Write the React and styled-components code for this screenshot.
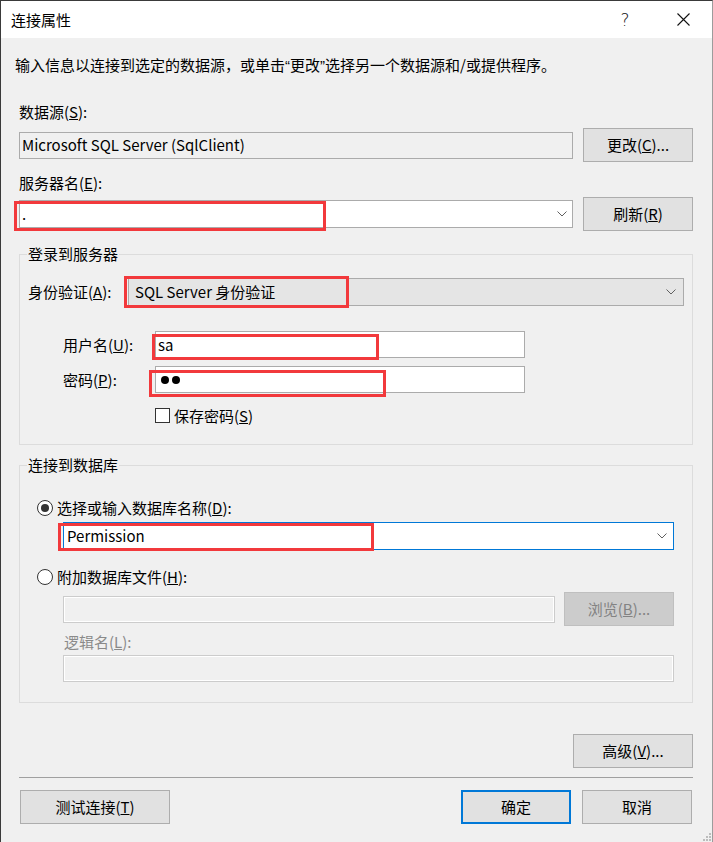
import React from "react";
import styled, { createGlobalStyle } from "styled-components";

const GlobalStyle = createGlobalStyle`
  html, body { margin: 0; padding: 0; background: #f0f0f0; }
  body {
    font-family: "Noto Sans CJK SC", "Noto Sans", sans-serif;
    font-size: 15px;
    color: #000;
  }
  * { box-sizing: border-box; }
`;

const Window = styled.div`
  position: relative;
  width: 713px;
  height: 842px;
  background: #f0f0f0;
  border-left: 1px solid #3a3a3a;
  border-top: 1px solid #3a3a3a;
  border-right: 1px solid #9c9c9c;
  display: flex;
  flex-direction: column;
  overflow: hidden;
`;

const TitleBar = styled.div`
  height: 37px;
  flex: none;
  background: #fff;
  display: flex;
  align-items: center;
  padding-left: 10px;
`;

const TitleText = styled.div`
  font-size: 15px;
  line-height: 20px;
`;

const CaptionButtons = styled.div`
  margin-left: auto;
  display: flex;
  height: 100%;
`;

const CaptionButton = styled.div`
  width: 58px;
  height: 100%;
  display: flex;
  align-items: center;
  justify-content: center;
  font-family: "DejaVu Sans", sans-serif;
  font-weight: 300;
  font-size: 17px;
  color: #111;
`;

const Body = styled.div`
  flex: 1;
  display: flex;
  flex-direction: column;
  padding: 17px 19px 0 18px;
`;

const Text = styled.div`
  line-height: 20px;
  white-space: nowrap;
  margin-top: ${(p) => p.$mt || 0}px;
  margin-left: ${(p) => p.$ml || 0}px;
  color: ${(p) => (p.$disabled ? "#8a8a8a" : "#000")};
`;

const Quote = styled.span`
  font-family: "Liberation Sans", sans-serif;
`;

const Row = styled.div`
  display: flex;
  align-items: center;
  height: ${(p) => p.$h || 34}px;
  margin-top: ${(p) => p.$mt || 0}px;
  padding-left: ${(p) => p.$pl || 0}px;
  padding-right: ${(p) => p.$pr || 0}px;
  gap: ${(p) => p.$gap || 0}px;
  justify-content: ${(p) => p.$justify || "flex-start"};
`;

const FieldWrap = styled.div`
  position: relative;
  flex: ${(p) => (p.$w ? "none" : "1")};
  width: ${(p) => (p.$w ? `${p.$w}px` : "auto")};
  height: ${(p) => p.$h || 27}px;
`;

const TextBox = styled.div`
  height: 100%;
  width: 100%;
  border: 1px solid ${(p) => (p.$disabled ? "#cccccc" : "#ababab")};
  background: ${(p) => (p.$readonly || p.$disabled ? "#f0f0f0" : "#fff")};
  box-shadow: ${(p) => (p.$disabled ? "inset 0 0 0 1px #fff" : "none")};
  display: flex;
  align-items: center;
  padding-left: ${(p) => p.$pl || 2}px;
  line-height: 20px;
  white-space: nowrap;
`;

const Combo = styled.div`
  height: 100%;
  width: 100%;
  border: 1px solid ${(p) => (p.$focused ? "#0078d7" : "#ababab")};
  background: ${(p) => (p.$list ? "#e5e5e5" : "#fff")};
  display: flex;
  align-items: center;
  padding-left: ${(p) => p.$pl || 2}px;
  padding-right: ${(p) => p.$pr || 6}px;
  line-height: 20px;
  white-space: nowrap;
`;

const ComboValue = styled.div`
  flex: 1;
`;

const Chevron = () => (
  <svg width="10" height="6" viewBox="0 0 10 6">
    <path d="M0.5 0.5 L5 5 L9.5 0.5" fill="none" stroke="#606060" strokeWidth="1" />
  </svg>
);

const Button = styled.div`
  flex: none;
  width: ${(p) => p.$w || 110}px;
  height: 34px;
  margin-left: ${(p) => (p.$auto ? "auto" : `${p.$ml || 0}px`)};
  margin-right: ${(p) => p.$mr || 0}px;
  background: ${(p) => (p.$disabled ? "#cccccc" : "#e1e1e1")};
  border: ${(p) =>
    p.$default ? "2px solid #0078d7" : p.$disabled ? "1px solid #bfbfbf" : "1px solid #adadad"};
  color: ${(p) => (p.$disabled ? "#838383" : "#000")};
  display: flex;
  align-items: center;
  justify-content: center;
  line-height: 20px;
  white-space: nowrap;
`;

const Group = styled.fieldset`
  margin: ${(p) => p.$mt || 0}px 0 0 0;
  padding: ${(p) => p.$pt || 0}px 8px ${(p) => p.$pb || 0}px 8px;
  border: 1px solid #dcdcdc;
  min-width: 0;
`;

const Legend = styled.legend`
  padding: 0 1px;
  margin-left: -1px;
  line-height: 20px;
  font-size: 15px;
`;

const Label = styled.div`
  flex: none;
  width: ${(p) => p.$w}px;
  line-height: 20px;
  white-space: nowrap;
`;

const CheckBox = styled.div`
  width: 15px;
  height: 15px;
  border: 1px solid #333;
  background: #fff;
  flex: none;
`;

const Radio = styled.div`
  width: 16px;
  height: 16px;
  border-radius: 50%;
  border: 1px solid #333;
  background: #fff;
  flex: none;
  display: flex;
  align-items: center;
  justify-content: center;
  &::after {
    content: "";
    display: ${(p) => (p.$checked ? "block" : "none")};
    width: 8px;
    height: 8px;
    border-radius: 50%;
    background: #333;
  }
`;

const OptionLabel = styled.div`
  margin-left: 4px;
  line-height: 20px;
  white-space: nowrap;
`;

const Indent = styled.div`
  display: flex;
  flex-direction: column;
  padding-left: ${(p) => p.$pl || 0}px;
  padding-right: ${(p) => p.$pr || 0}px;
`;

const Separator = styled.div`
  height: 1px;
  background: #a0a0a0;
  margin-top: 9px;
`;

const Highlight = styled.div`
  position: absolute;
  left: ${(p) => p.$l}px;
  top: ${(p) => p.$t}px;
  width: ${(p) => p.$w}px;
  height: ${(p) => p.$h}px;
  border: 3px solid #f2393c;
  pointer-events: none;
`;

const Grip = styled.svg`
  position: absolute;
  right: 1px;
  bottom: 1px;
`;

const Dots = styled.div`
  display: flex;
  gap: 3px;
  padding-left: 3px;
`;

const Dot = styled.span`
  width: 8px;
  height: 8px;
  border-radius: 50%;
  background: #000;
`;

export default function App() {
  return (
    <>
      <GlobalStyle />
      <Window>
        <TitleBar>
          <TitleText>连接属性</TitleText>
          <CaptionButtons>
            <CaptionButton>?</CaptionButton>
            <CaptionButton>
              <svg width="13" height="13" viewBox="0 0 13 13">
                <path d="M0.5 0.5 L12.5 12.5 M12.5 0.5 L0.5 12.5" stroke="#111" strokeWidth="1.1" />
              </svg>
            </CaptionButton>
          </CaptionButtons>
        </TitleBar>
        <Body>
          <Text $ml={-4}>
            输入信息以连接到选定的数据源，或单击<Quote>“</Quote>更改<Quote>”</Quote>选择另一个数据源和/或提供程序。
          </Text>
          <Text $mt={26}>
            数据源(<u>S</u>):
          </Text>
          <Row $mt={6} $gap={10}>
            <FieldWrap>
              <TextBox $readonly>Microsoft SQL Server (SqlClient)</TextBox>
            </FieldWrap>
            <Button>
              更改(<u>C</u>)...
            </Button>
          </Row>
          <Text $mt={11}>
            服务器名(<u>E</u>):
          </Text>
          <Row $mt={4} $gap={10}>
            <FieldWrap $h={28}>
              <Combo $pr={5}>
                <ComboValue>.</ComboValue>
                <Chevron />
              </Combo>
              <Highlight $l={-5} $t={1} $w={312} $h={30} />
            </FieldWrap>
            <Button>
              刷新(<u>R</u>)
            </Button>
          </Row>

          <Group $mt={13} $pt={14} $pb={21}>
            <Legend>登录到服务器</Legend>
            <Row $h={28}>
              <Label $w={100}>
                身份验证(<u>A</u>):
              </Label>
              <FieldWrap $h={28}>
                <Combo $list $pl={6} $pr={7}>
                  <ComboValue>SQL Server 身份验证</ComboValue>
                  <Chevron />
                </Combo>
                <Highlight $l={-4} $t={-2} $w={225} $h={32} />
              </FieldWrap>
            </Row>
            <Row $h={27} $mt={25} $pl={35}>
              <Label $w={92}>
                用户名(<u>U</u>):
              </Label>
              <FieldWrap $w={370}>
                <TextBox>sa</TextBox>
                <Highlight $l={-3} $t={3} $w={227} $h={26} />
              </FieldWrap>
            </Row>
            <Row $h={27} $mt={8} $pl={35}>
              <Label $w={92}>
                密码(<u>P</u>):
              </Label>
              <FieldWrap $w={370}>
                <TextBox>
                  <Dots>
                    <Dot />
                    <Dot />
                  </Dots>
                </TextBox>
                <Highlight $l={-6} $t={4} $w={237} $h={27} />
              </FieldWrap>
            </Row>
            <Row $h={15} $mt={15} $pl={127}>
              <CheckBox />
              <OptionLabel>
                保存密码(<u>S</u>)
              </OptionLabel>
            </Row>
          </Group>

          <Group $mt={10} $pt={23} $pb={20}>
            <Legend>连接到数据库</Legend>
            <Indent $pl={9} $pr={10}>
              <Row $h={20}>
                <Radio $checked />
                <OptionLabel>
                  选择或输入数据库名称(<u>D</u>):
                </OptionLabel>
              </Row>
              <Indent $pl={26}>
                <Row $h={28} $mt={4}>
                  <FieldWrap $h={28}>
                    <Combo $focused $pl={3} $pr={6}>
                      <ComboValue>Permission</ComboValue>
                      <Chevron />
                    </Combo>
                    <Highlight $l={-5} $t={1} $w={316} $h={28} />
                  </FieldWrap>
                </Row>
              </Indent>
              <Row $h={20} $mt={17}>
                <Radio />
                <OptionLabel>
                  附加数据库文件(<u>H</u>):
                </OptionLabel>
              </Row>
              <Indent $pl={26}>
                <Row $h={34} $mt={5} $gap={9}>
                  <FieldWrap>
                    <TextBox $disabled />
                  </FieldWrap>
                  <Button $disabled>
                    浏览(<u>B</u>)...
                  </Button>
                </Row>
                <Text $mt={6} $ml={1} $disabled>
                  逻辑名(<u>L</u>):
                </Text>
                <Row $h={27} $mt={3}>
                  <FieldWrap>
                    <TextBox $disabled />
                  </FieldWrap>
                </Row>
              </Indent>
            </Indent>
          </Group>

          <Row $mt={31} $justify="flex-end">
            <Button $w={120}>
              高级(<u>V</u>)...
            </Button>
          </Row>
          <Separator />
          <Row $mt={12}>
            <Button $w={150} $ml={1}>
              测试连接(<u>T</u>)
            </Button>
            <Button $w={110} $auto $default>
              确定
            </Button>
            <Button $w={110} $ml={11} $mr={1}>
              取消
            </Button>
          </Row>
        </Body>
        <Grip width="8" height="8" viewBox="0 0 8 8">
          <rect x="6" y="0" width="2" height="2" fill="#bcbcbc" />
          <rect x="3" y="3" width="2" height="2" fill="#bcbcbc" />
          <rect x="6" y="3" width="2" height="2" fill="#bcbcbc" />
          <rect x="0" y="6" width="2" height="2" fill="#bcbcbc" />
          <rect x="3" y="6" width="2" height="2" fill="#bcbcbc" />
          <rect x="6" y="6" width="2" height="2" fill="#bcbcbc" />
        </Grip>
      </Window>
    </>
  );
}
